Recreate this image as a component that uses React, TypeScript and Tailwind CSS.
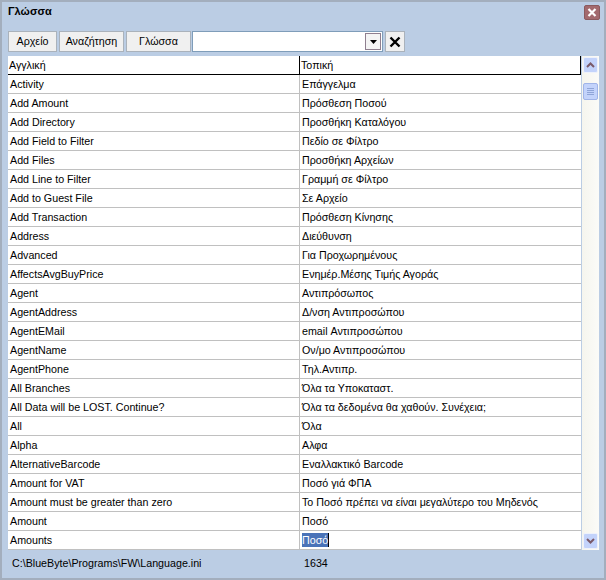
const rows: [string, string][] = [
  ["Activity", "Επάγγελμα"],
  ["Add Amount", "Πρόσθεση Ποσού"],
  ["Add Directory", "Προσθήκη Καταλόγου"],
  ["Add Field to Filter", "Πεδίο σε Φίλτρο"],
  ["Add Files", "Προσθήκη Αρχείων"],
  ["Add Line to Filter", "Γραμμή σε Φίλτρο"],
  ["Add to Guest File", "Σε Αρχείο"],
  ["Add Transaction", "Πρόσθεση Κίνησης"],
  ["Address", "Διεύθυνση"],
  ["Advanced", "Για Προχωρημένους"],
  ["AffectsAvgBuyPrice", "Ενημέρ.Μέσης Τιμής Αγοράς"],
  ["Agent", "Αντιπρόσωπος"],
  ["AgentAddress", "Δ/νση Αντιπροσώπου"],
  ["AgentEMail", "email Αντιπροσώπου"],
  ["AgentName", "Ον/μο Αντιπροσώπου"],
  ["AgentPhone", "Τηλ.Αντιπρ."],
  ["All Branches", "Όλα τα Υποκαταστ."],
  ["All Data will be LOST. Continue?", "Όλα τα δεδομένα θα χαθούν. Συνέχεια;"],
  ["All", "Όλα"],
  ["Alpha", "Αλφα"],
  ["AlternativeBarcode", "Εναλλακτικό Barcode"],
  ["Amount for VAT", "Ποσό γιά ΦΠΑ"],
  ["Amount must be greater than zero", "Το Ποσό πρέπει να είναι μεγαλύτερο του Μηδενός"],
  ["Amount", "Ποσό"],
  ["Amounts", "Ποσό"],
];

function ToolButton({ label, w }: { label: string; w: string }) {
  return (
    <button className={`${w} h-[21px] bg-[#f0f0f0] border border-[#aab2bb] text-[10.7px] text-black flex items-center justify-center`}>
      {label}
    </button>
  );
}

export default function App() {
  return (
    <div
      className="w-[606px] h-[580px] bg-[#bbcde4] border-t-2 border-b-2 border-l-2 border-r-2 border-[#a3aebd] flex flex-col overflow-hidden text-black"
      style={{ fontFamily: '"Liberation Sans", Arial, sans-serif' }}
    >
      <div className="h-[29px] flex items-start justify-between pl-[6px] pr-[4px] pt-[1px]">
        <span className="text-[11px] font-bold leading-[16px]">Γλώσσα</span>
        <div className="w-[16px] h-[15px] mt-[2px] bg-[#a36a6e] border border-[#8a5a5e] rounded-[2px] flex items-center justify-center">
          <svg width="10" height="9" viewBox="0 0 10 9">
            <path d="M1.5 1 L8.5 8 M8.5 1 L1.5 8" stroke="#fff" strokeWidth="2.2" />
          </svg>
        </div>
      </div>

      <div className="h-[21px] flex items-stretch pl-[6px] gap-[2px]">
        <ToolButton label="Αρχείο" w="w-[49px]" />
        <ToolButton label="Αναζήτηση" w="w-[65px]" />
        <ToolButton label="Γλώσσα" w="w-[65px]" />
        <div className="w-[191px] -ml-[1px] h-[21px] bg-white border border-[#7f9db9] flex items-center justify-end pr-[1px]">
          <div className="w-[16px] h-[17px] bg-[#f4f4f4] border border-[#8f7f8f] flex items-center justify-center">
            <svg width="7" height="4" viewBox="0 0 7 4"><path d="M0 0 H7 L3.5 4 Z" fill="#000" /></svg>
          </div>
        </div>
        <button className="w-[20px] h-[21px] bg-[#f0f0f0] border border-[#aab2bb] flex items-center justify-center">
          <svg width="12" height="12" viewBox="0 0 12 12">
            <path d="M1.5 1.5 L10.5 10.5 M10.5 1.5 L1.5 10.5" stroke="#000" strokeWidth="2.4" />
          </svg>
        </button>
      </div>

      <div className="flex pl-[6px] mt-[4px]">
        <div className="w-[573px] bg-white text-[10.7px]">
          <div className="h-[19px] flex border-b border-black">
            <div className="w-[292px] border-r border-black pl-[1px] leading-[18px]">Αγγλική</div>
            <div className="flex-1 pl-[1px] leading-[18px] border-r border-black">Τοπική</div>
          </div>
          {rows.map(([en, gr], i) => (
            <div key={i} className="h-[19px] flex border-b border-[#c0c0c0]">
              <div className="w-[292px] border-r border-[#c0c0c0] pl-[2px] leading-[19px] whitespace-nowrap">{en}</div>
              <div className="flex-1 pl-[2px] leading-[19px] whitespace-nowrap">
                {i === rows.length - 1 ? (
                  <span className="bg-[#4a73b8] text-white border-r border-black inline-block leading-[14px]">{gr}</span>
                ) : (
                  gr
                )}
              </div>
            </div>
          ))}
        </div>

        <div className="w-[17px] ml-[1px] h-[494px] bg-gradient-to-r from-[#f5f5ee] to-[#fbfbf8] flex flex-col items-center pt-[1px] pb-[1px]">
          <div className="w-[15px] h-[16px] bg-[#c3d3fb] border border-[#eef2fb] rounded-[2px] flex items-center justify-center">
            <svg width="9" height="6" viewBox="0 0 9 6"><path d="M1 5 L4.5 1.5 L8 5" fill="none" stroke="#7a5a6a" strokeWidth="2" /></svg>
          </div>
          <div className="w-[15px] h-[17px] mt-[10px] bg-[#c3d3fb] border border-[#a0b4e8] rounded-[2px] flex flex-col items-center justify-center gap-[1px]">
            <div className="w-[7px] h-px bg-[#8fa5d8]" />
            <div className="w-[7px] h-px bg-[#8fa5d8]" />
            <div className="w-[7px] h-px bg-[#8fa5d8]" />
            <div className="w-[7px] h-px bg-[#8fa5d8]" />
          </div>
          <div className="flex-1" />
          <div className="w-[15px] h-[16px] bg-[#c3d3fb] border border-[#eef2fb] rounded-[2px] flex items-center justify-center">
            <svg width="9" height="6" viewBox="0 0 9 6"><path d="M1 1 L4.5 4.5 L8 1" fill="none" stroke="#7a5a6a" strokeWidth="2" /></svg>
          </div>
        </div>
      </div>

      <div className="flex-1 flex items-center text-[10.7px] pl-[10px] pb-[2px]">
        <span className="w-[292px]">C:\BlueByte\Programs\FW\Language.ini</span>
        <span>1634</span>
      </div>
    </div>
  );
}
